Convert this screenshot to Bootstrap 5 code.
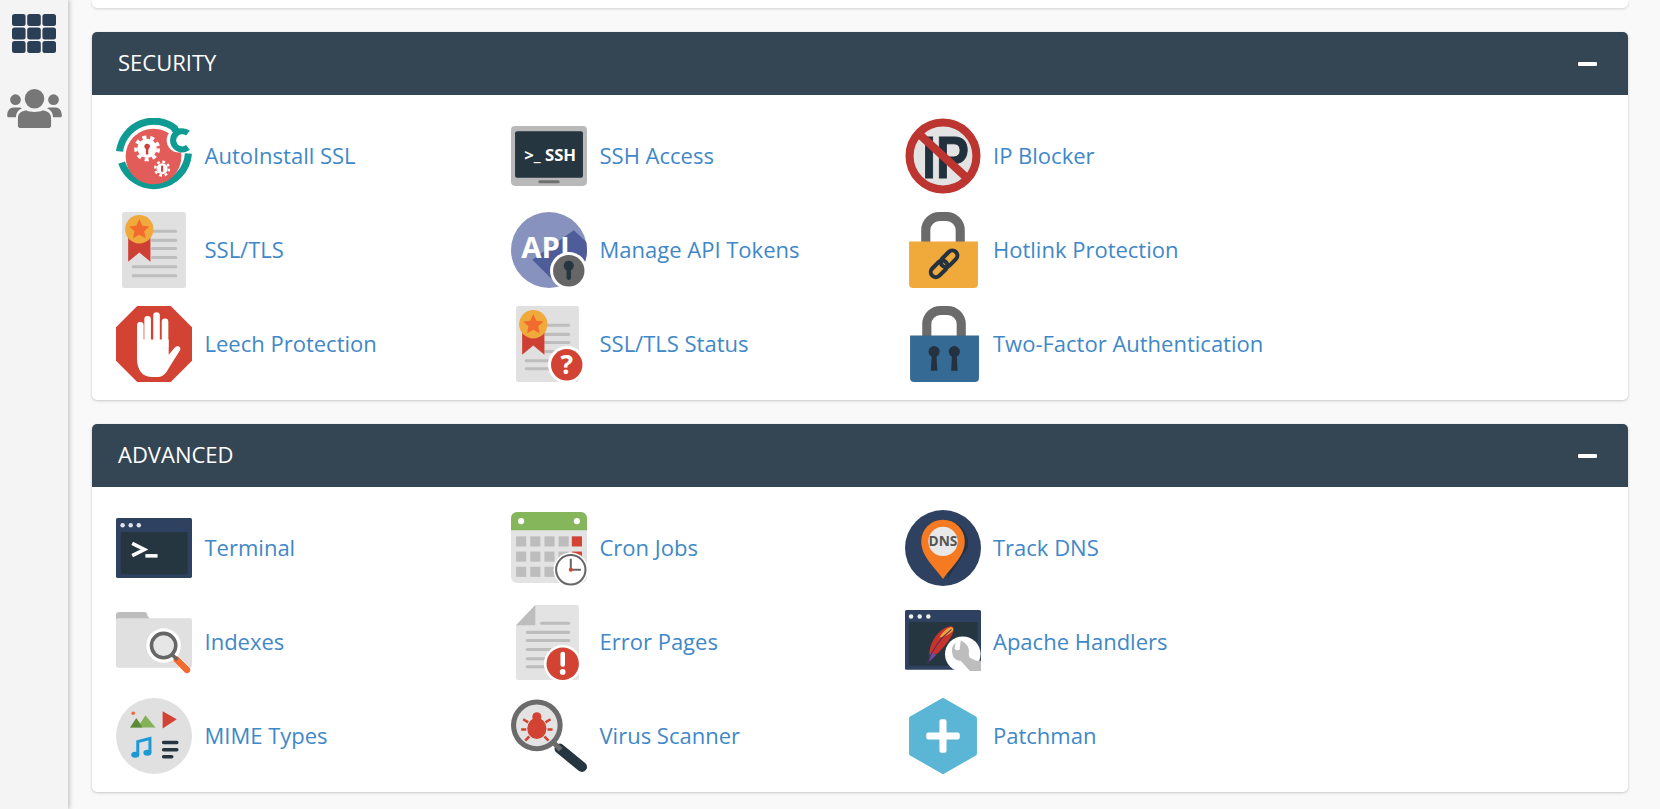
<!DOCTYPE html>
<html lang="en">
<head>
<meta charset="utf-8">
<title>cPanel</title>
<link href="https://cdn.jsdelivr.net/npm/bootstrap@5.3.0/dist/css/bootstrap.min.css" rel="stylesheet">
<style>
html,body{height:100%;overflow:hidden}
body{background:#f9f9f9;font-family:"Open Sans","Liberation Sans",sans-serif}
.side-rail{width:68px;background:#f4f4f4;box-shadow:2px 0 4px rgba(0,0,0,.2);flex:none;padding-top:14px;z-index:2}
.rail-grid{width:44px;height:39px;display:block}
.rail-users{width:55px;height:39px;display:block;margin-top:36px}
.main-col{padding:0 32px 0 24px;flex:1;min-width:0}
.stub-card{height:8px;background:#fff;border-radius:0 0 5px 5px;box-shadow:0 1px 3px rgba(0,0,0,.16);margin-bottom:24px}
.tool-card{border:0;border-radius:5px;box-shadow:0 1px 3px rgba(0,0,0,.2);margin-bottom:24px;background:#fff}
.tool-head{background:#344554;color:#fff;height:63px;border:0;border-radius:5px 5px 0 0!important;padding:0 31px 0 26px;font-size:22px;line-height:1;text-transform:uppercase}
.head-label{margin-bottom:4px}
.minus-bar{width:19px;height:4px;background:#fff;border-radius:1px}
.tool-body{padding:23px 24px 18px;display:grid;grid-template-columns:395px 393.5px 394px;row-gap:18px}
.tool-link{color:#3f88c8;font-size:22px;text-decoration:none;height:76px;gap:12.500px}
.tool-link span{line-height:1.2;margin-bottom:2px}
.tool-link svg{width:76px;height:76px;flex:none}
.svg-bold{font-family:"Open Sans","Liberation Sans",sans-serif;font-weight:700}
</style>
</head>
<body class="d-flex">
<aside class="side-rail d-flex flex-column align-items-center">
  <svg class="rail-grid" viewBox="0 0 44 39" fill="#2a3f55">
    <rect x="0" y="0" width="13.600" height="12" rx="2.500"/><rect x="15.200" y="0" width="13.600" height="12" rx="2.500"/><rect x="30.400" y="0" width="13.600" height="12" rx="2.500"/>
    <rect x="0" y="13.500" width="13.600" height="12" rx="2.500"/><rect x="15.200" y="13.500" width="13.600" height="12" rx="2.500"/><rect x="30.400" y="13.500" width="13.600" height="12" rx="2.500"/>
    <rect x="0" y="27" width="13.600" height="12" rx="2.500"/><rect x="15.200" y="27" width="13.600" height="12" rx="2.500"/><rect x="30.400" y="27" width="13.600" height="12" rx="2.500"/>
  </svg>
  <svg class="rail-users" viewBox="0 0 56 40" fill="#777">
    <circle cx="28" cy="10" r="10"/><circle cx="8.500" cy="11" r="5.500"/><circle cx="47.500" cy="11" r="5.500"/>
    <path d="M11 38v-8c0-6 5-8 9-8 3 2 13 2 16 0 4 0 9 2 9 8v8c0 1-1 2-2 2H13c-1 0-2-1-2-2z"/>
    <path d="M9 29H1c-1 0-1-1-1-2 0-5 3-8 6-8h7c1 0 2 1 2 1-3 1-6 4-6 9zM47 29h8c1 0 1-1 1-2 0-5-3-8-6-8h-7c-1 0-2 1-2 1 3 1 6 4 6 9z"/>
  </svg>
</aside>
<main class="main-col">
  <div class="stub-card"></div>

  <section class="card tool-card">
    <div class="card-header tool-head d-flex align-items-center justify-content-between"><span class="head-label">Security</span><span class="minus-bar"></span></div>
    <div class="tool-body">
      <a class="tool-link d-flex align-items-center" href="#">
        <svg viewBox="0 0 75 75">
          <path d="M3.500 33A34 34 0 0 1 59 11" fill="none" stroke="#0f9b93" stroke-width="7"/>
          <path d="M5.500 44A34 34 0 0 0 71.500 35" fill="none" stroke="#0f9b93" stroke-width="7"/>
          <circle cx="37" cy="38" r="27.500" fill="#e25c5a"/>
          <circle cx="30.700" cy="30" r="5.500" fill="none" stroke="#fff" stroke-width="8"/>
          <circle cx="30.700" cy="30" r="11" fill="none" stroke="#fff" stroke-width="3.500" stroke-dasharray="4 3.800"/>
          <circle cx="30.700" cy="28" r="2.700" fill="#c9403f"/><rect x="29.500" y="29" width="2.400" height="7" fill="#c9403f"/>
          <circle cx="45.500" cy="50" r="3.200" fill="none" stroke="#fff" stroke-width="4.500"/>
          <circle cx="45.500" cy="50" r="6.800" fill="none" stroke="#fff" stroke-width="2.400" stroke-dasharray="2.700 2.650"/>
          <rect x="44.500" y="47" width="2" height="6" fill="#c9403f"/>
          <circle cx="62" cy="22" r="12" fill="#fff"/>
          <path d="M71 15A9 9 0 1 0 71 29" fill="none" stroke="#0f9b93" stroke-width="6"/>
          <path d="M57 10l5 5" stroke="#0f9b93" stroke-width="7"/>
        </svg>
        <span>AutoInstall SSL</span>
      </a>
      <a class="tool-link d-flex align-items-center" href="#">
        <svg viewBox="0 0 75 75">
          <rect x="0" y="8" width="75" height="59" rx="4" fill="#b9b9b9"/>
          <rect x="4" y="13" width="67" height="46" rx="2" fill="#263640"/>
          <rect x="27" y="61.500" width="21" height="3" rx="1.500" fill="#6f6f6f"/>
          <text x="13" y="42" class="svg-bold" font-size="16.500" fill="#fff">&gt;_ SSH</text>
        </svg>
        <span>SSH Access</span>
      </a>
      <a class="tool-link d-flex align-items-center" href="#">
        <svg viewBox="0 0 75 75">
          <circle cx="37.500" cy="37.500" r="33" fill="#e3e3e3" stroke="#bd3530" stroke-width="8"/>
          <text x="17" y="59" font-family="'Liberation Sans',sans-serif" font-weight="700" font-size="58" fill="#20303d" stroke="#20303d" stroke-width="1" textLength="46" lengthAdjust="spacingAndGlyphs">IP</text>
          <path d="M12 14L63 61" stroke="#bd3530" stroke-width="8"/>
        </svg>
        <span>IP Blocker</span>
      </a>
      <a class="tool-link d-flex align-items-center" href="#">
        <svg viewBox="0 0 75 75">
          <rect x="6" y="0" width="63" height="75" rx="2" fill="#e0e0e0"/>
          <g stroke="#bdbdbd" stroke-width="3" stroke-linecap="round"><path d="M36 19H59M36 28H59M36 36H59M36 45H59M17 54H59M17 63H59"/></g>
          <path d="M12 17H34V49L23 40 12 49z" fill="#cf4034"/>
          <circle cx="23" cy="17" r="14" fill="#f0a93b"/>
          <path d="M23 7l3 6.500 7 .8-5.200 4.700 1.400 7L23 22.500 16.800 26l1.400-7L13 14.300l7-.8z" fill="#f26a2e"/>
        </svg>
        <span>SSL/TLS</span>
      </a>
      <a class="tool-link d-flex align-items-center" href="#">
        <svg viewBox="0 0 75 75">
          <defs><clipPath id="apiClip"><circle cx="37.500" cy="37.500" r="37.500"/></clipPath></defs>
          <circle cx="37.500" cy="37.500" r="37.500" fill="#8892bf"/>
          <path d="M21 47l28 28h26V30L62 18z" fill="#4e5d99" clip-path="url(#apiClip)"/>
          <text x="34" y="45" text-anchor="middle" class="svg-bold" font-size="29" fill="#fff">API</text>
          <circle cx="57" cy="58" r="18.500" fill="#fff"/>
          <circle cx="57" cy="58" r="15.500" fill="#666"/>
          <circle cx="57" cy="53" r="5" fill="#263640"/><rect x="54.800" y="54" width="4.400" height="13" rx="2" fill="#263640"/>
        </svg>
        <span>Manage API Tokens</span>
      </a>
      <a class="tool-link d-flex align-items-center" href="#">
        <svg viewBox="0 0 75 75">
          <path d="M20.500 30V18A13.500 13.500 0 0 1 34 4.500h7A13.500 13.500 0 0 1 54.500 18V30" fill="none" stroke="#6b6b6b" stroke-width="9"/>
          <path d="M4 29H72V71a4 4 0 0 1-4 4H8a4 4 0 0 1-4-4z" fill="#f0a93b"/>
          <g transform="rotate(-45 38.700 51)" fill="none" stroke="#24323f" stroke-width="4">
            <rect x="22" y="46" width="19" height="10" rx="5"/>
            <rect x="36" y="46" width="19" height="10" rx="5"/>
          </g>
        </svg>
        <span>Hotlink Protection</span>
      </a>
      <a class="tool-link d-flex align-items-center" href="#">
        <svg viewBox="0 0 75 75">
          <path d="M21 0h33l21 21v33L54 75H21L0 54V21z" fill="#d24333"/>
          <g stroke="#fff" stroke-width="6.500" stroke-linecap="round"><path d="M24 19V40M31.200 13V40M40 9.500V40M48.400 15.500V40"/></g>
          <path d="M20.700 33V52c0 10 5 18 14 18h7c5 0 8-4 10-8L63 44c2-3-2-6-5-3l-6 7V33z" fill="#fff"/>
        </svg>
        <span>Leech Protection</span>
      </a>
      <a class="tool-link d-flex align-items-center" href="#">
        <svg viewBox="0 0 75 75">
          <rect x="5" y="0" width="62" height="75" rx="2" fill="#e0e0e0"/>
          <g stroke="#bdbdbd" stroke-width="3" stroke-linecap="round"><path d="M34 19H57M34 28H57M34 36H57M34 45H57M15 54H38M15 62H38"/></g>
          <path d="M11 18H33V48L22 39 11 48z" fill="#cf4034"/>
          <circle cx="22" cy="18" r="14" fill="#f0a93b"/>
          <path d="M22 8l3 6.500 7 .8-5.200 4.700 1.400 7L22 23.500 15.800 27l1.400-7L12 15.300l7-.8z" fill="#f26a2e"/>
          <circle cx="55" cy="58" r="18.500" fill="#fff"/>
          <circle cx="55" cy="58" r="15.500" fill="#d24333"/>
          <text x="55" y="67" text-anchor="middle" class="svg-bold" font-size="26" fill="#fff">?</text>
        </svg>
        <span>SSL/TLS Status</span>
      </a>
      <a class="tool-link d-flex align-items-center" href="#">
        <svg viewBox="0 0 75 75">
          <path d="M21.500 30V18A13.500 13.500 0 0 1 35 4.500h7A13.500 13.500 0 0 1 55.500 18V30" fill="none" stroke="#6b6b6b" stroke-width="9"/>
          <path d="M5 29H73V71a4 4 0 0 1-4 4H9a4 4 0 0 1-4-4z" fill="#346a94"/>
          <g fill="#24323f"><circle cx="28.700" cy="45" r="5.500"/><path d="M26.500 46h4.400l1 18h-6.400z"/><circle cx="48.700" cy="45" r="5.500"/><path d="M46.500 46h4.400l1 18h-6.400z"/></g>
        </svg>
        <span>Two-Factor Authentication</span>
      </a>
    </div>
  </section>

  <section class="card tool-card">
    <div class="card-header tool-head d-flex align-items-center justify-content-between"><span class="head-label">Advanced</span><span class="minus-bar"></span></div>
    <div class="tool-body">
      <a class="tool-link d-flex align-items-center" href="#">
        <svg viewBox="0 0 75 75">
          <rect x="0" y="8" width="75" height="59" rx="1.500" fill="#2e4160"/>
          <rect x="4.700" y="21.700" width="66" height="41.600" rx="1.500" fill="#263640"/>
          <g fill="#dfe3ea"><circle cx="6.500" cy="15" r="2.200"/><circle cx="14.500" cy="15" r="2.200"/><circle cx="22.500" cy="15" r="2.200"/></g>
          <path d="M16 33l12 6-12 6" fill="none" stroke="#fff" stroke-width="3.500"/>
          <rect x="29" y="43.500" width="12" height="3.500" fill="#fff"/>
        </svg>
        <span>Terminal</span>
      </a>
      <a class="tool-link d-flex align-items-center" href="#">
        <svg viewBox="0 0 75 75">
          <rect x="0" y="2" width="75" height="70" rx="6" fill="#e3e3e3"/>
          <path d="M0 20V8a6 6 0 0 1 6-6h63a6 6 0 0 1 6 6v12z" fill="#85b65c"/>
          <circle cx="10" cy="11" r="3" fill="#fff"/><circle cx="65" cy="11" r="3" fill="#fff"/>
          <g fill="#bdbdbd">
            <rect x="5" y="26" width="10" height="10"/><rect x="19" y="26" width="10" height="10"/><rect x="33" y="26" width="10" height="10"/><rect x="47" y="26" width="10" height="10"/>
            <rect x="5" y="41" width="10" height="10"/><rect x="19" y="41" width="10" height="10"/><rect x="33" y="41" width="10" height="10"/><rect x="47" y="41" width="10" height="10"/>
            <rect x="5" y="56" width="10" height="10"/><rect x="19" y="56" width="10" height="10"/><rect x="33" y="56" width="10" height="10"/>
          </g>
          <rect x="60" y="26" width="10" height="10" fill="#d24333"/><rect x="60" y="41" width="10" height="10" fill="#d24333"/>
          <circle cx="59" cy="59" r="17" fill="#fff"/>
          <circle cx="59" cy="59" r="14.500" fill="#fff" stroke="#666" stroke-width="2"/>
          <path d="M59 48v11h10" fill="none" stroke="#666" stroke-width="2"/>
          <circle cx="59" cy="59" r="2" fill="#d24333"/>
        </svg>
        <span>Cron Jobs</span>
      </a>
      <a class="tool-link d-flex align-items-center" href="#">
        <svg viewBox="0 0 75 75">
          <circle cx="37.500" cy="37.500" r="37.500" fill="#2e4160"/>
          <path d="M42 68l20-31A22 22 0 0 0 40 11z" fill="#263245"/>
          <path d="M37.500 68C30 57 16 46 16 31a21.500 21.500 0 0 1 43 0C59 46 45 57 37.500 68z" fill="#f57a21"/>
          <circle cx="37.500" cy="31" r="14.500" fill="#e8e8e8"/>
          <text x="37.500" y="36" text-anchor="middle" class="svg-bold" font-size="13.500" fill="#555">DNS</text>
        </svg>
        <span>Track DNS</span>
      </a>
      <a class="tool-link d-flex align-items-center" href="#">
        <svg viewBox="0 0 75 75">
          <path d="M0 11a3 3 0 0 1 3-3H27a3 3 0 0 1 4 3l3 5H0z" fill="#bdbdbd"/>
          <path d="M0 16a2 2 0 0 1 2-2H73a2 2 0 0 1 2 2V61a2 2 0 0 1-2 2H2a2 2 0 0 1-2-2z" fill="#e0e0e0"/>
          <circle cx="47" cy="41" r="17" fill="#fff"/>
          <path d="M54 53l5-5 14 15c1 2-4 7-6 5z" fill="#fff"/>
          <circle cx="47" cy="41" r="12" fill="#e6e6e6" stroke="#666" stroke-width="3.500"/>
          <path d="M60 55l10 10" stroke="#f26a2e" stroke-width="6.500" stroke-linecap="round"/>
          <path d="M55.500 50l5 5" stroke="#666" stroke-width="3.500"/>
        </svg>
        <span>Indexes</span>
      </a>
      <a class="tool-link d-flex align-items-center" href="#">
        <svg viewBox="0 0 75 75">
          <path d="M24 1H65a2 2 0 0 1 2 2V73a2 2 0 0 1-2 2H7a2 2 0 0 1-2-2V21z" fill="#e3e3e3"/>
          <path d="M24 1V21H5z" fill="#bdbdbd"/>
          <g stroke="#bdbdbd" stroke-width="3" stroke-linecap="round"><path d="M30 19H57M16 28H57M16 36H57M16 45H50M16 54H38M16 62H38"/></g>
          <circle cx="51" cy="59" r="18.500" fill="#fff"/>
          <circle cx="51" cy="59" r="16" fill="#d24333"/>
          <rect x="48.800" y="47" width="4.500" height="15" rx="2" fill="#fff"/><circle cx="51" cy="67" r="2.800" fill="#fff"/>
        </svg>
        <span>Error Pages</span>
      </a>
      <a class="tool-link d-flex align-items-center" href="#">
        <svg viewBox="0 0 75 75">
          <rect x="0" y="6" width="75" height="59" rx="1.500" fill="#2e4160"/>
          <rect x="3.700" y="17.700" width="68" height="43.300" rx="1.500" fill="#263640"/>
          <g fill="#f0f0f0"><circle cx="6" cy="12.300" r="2.200"/><circle cx="14.500" cy="12.300" r="2.200"/><circle cx="23" cy="12.300" r="2.200"/></g>
          <path d="M24 50C24 38 33 24 45 22c2 0 3 1 3 3 0 6-8 16-16 24z" fill="#c8332c"/>
          <path d="M34 33c3-5 7-9 11-10 3 0 3 2 2 4-3 3-7 5-13 6z" fill="#f0a33a"/>
          <path d="M23 57l2-9 6 2-5 5z" fill="#6d4fa0"/>
          <path d="M22 59C26 47 34 34 46 25" fill="none" stroke="#4c2c5e" stroke-width="1"/>
          <circle cx="57" cy="49.500" r="17.500" fill="#fff"/>
          <path d="M50 38a11 11 0 0 0-3 12c1 4 4 6 8 6l9 10h11V56l-5 0-6-3c-1-2-1-3-1-5 1-5-3-10-8-12l-1 9c-2 1-4 1-5-1z" fill="#bdbdbd"/>
        </svg>
        <span>Apache Handlers</span>
      </a>
      <a class="tool-link d-flex align-items-center" href="#">
        <svg viewBox="0 0 75 75">
          <circle cx="37.500" cy="37.500" r="37.500" fill="#e0e0e0"/>
          <circle cx="17" cy="15" r="1.800" fill="#f26a2e"/>
          <path d="M14 29l6-9 4 5 5-8 10 12z" fill="#84b259"/>
          <path d="M14 29l6-9 6 9z" fill="#5e8a3c"/>
          <path d="M46 13l14 8-14 9z" fill="#d24333"/>
          <path d="M21.500 56V43l12-3v14" fill="none" stroke="#1d9ad6" stroke-width="3"/>
          <ellipse cx="19" cy="56" rx="4" ry="3" fill="#1d9ad6"/><ellipse cx="31" cy="54" rx="4" ry="3" fill="#1d9ad6"/>
          <g stroke="#263640" stroke-width="3.500" stroke-linecap="round"><path d="M47 44H60M47 51H60M47 58H55"/></g>
        </svg>
        <span>MIME Types</span>
      </a>
      <a class="tool-link d-flex align-items-center" href="#">
        <svg viewBox="0 0 75 75">
          <circle cx="25.500" cy="27" r="23" fill="#e3e3e3" stroke="#6b6b6b" stroke-width="5"/>
          <path d="M48 50l22 18" stroke="#263640" stroke-width="10" stroke-linecap="round"/>
          <path d="M43 45l6 6" stroke="#6b6b6b" stroke-width="5"/>
          <ellipse cx="25.500" cy="30" rx="9.500" ry="10.500" fill="#d24333"/>
          <circle cx="25.500" cy="18.500" r="4.500" fill="#d24333"/>
          <path d="M17 24l-5-3M34 24l5-3M15 31h-5M36 31h5M18 38l-4 4M33 38l4 4" stroke="#d24333" stroke-width="2.500" fill="none"/>
        </svg>
        <span>Virus Scanner</span>
      </a>
      <a class="tool-link d-flex align-items-center" href="#">
        <svg viewBox="0 0 75 75">
          <path d="M37.500 2L69 20V55L37.500 73 6 55V20z" fill="#5bb6d6" stroke="#5bb6d6" stroke-width="4" stroke-linejoin="round"/>
          <rect x="34" y="21" width="7" height="33" rx="2" fill="#fff"/>
          <rect x="21" y="34" width="33" height="7" rx="2" fill="#fff"/>
        </svg>
        <span>Patchman</span>
      </a>
    </div>
  </section>
</main>
</body>
</html>
